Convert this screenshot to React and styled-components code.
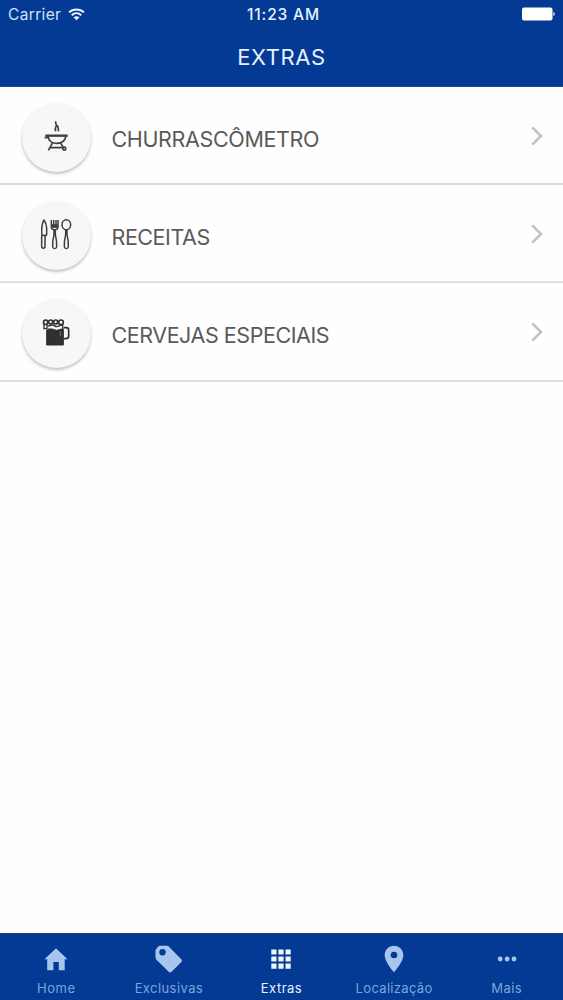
import React from "react";
import styled, { createGlobalStyle } from "styled-components";

const GlobalStyle = createGlobalStyle`
  * {
    box-sizing: border-box;
  }

  body {
    margin: 0;
    background: #fefefe;
    font-family: Inter, "Liberation Sans", sans-serif;
  }
`;

const Screen = styled.div`
  width: 100%;
  height: 1000px;
  display: flex;
  flex-direction: column;
  overflow: hidden;
`;

const Header = styled.header`
  height: 87px;
  background: #043a93;
  color: #e4f2ff;
  border-bottom: 1px solid #224a80;
`;

const StatusBar = styled.div`
  height: 28px;
  padding: 0 8px;
  display: grid;
  grid-template-columns: 1fr auto 1fr;
  align-items: center;
`;

const Carrier = styled.div`
  display: flex;
  align-items: center;
  gap: 7px;
  font-size: 15.5px;
  letter-spacing: 0.35px;
  color: #cfe4fb;
`;

const Clock = styled.div`
  padding-left: 4px;
  font-size: 15.5px;
  font-weight: 500;
  letter-spacing: 0.85px;
`;

const Battery = styled.svg`
  justify-self: end;
`;

const Title = styled.h1`
  margin: 0;
  height: 58px;
  line-height: 58px;
  text-align: center;
  font-size: 22px;
  font-weight: 400;
  letter-spacing: 0.6px;
`;

const List = styled.ul`
  flex: 1;
  margin: 0;
  padding: 0;
  list-style: none;
`;

const Item = styled.li`
  height: 98px;
  padding: 5px 20px 0 21.5px;
  display: flex;
  align-items: center;
  border-bottom: 2px solid #dedede;

  &:last-child {
    height: 99px;
    padding-top: 4px;
  }
`;

const Avatar = styled.div`
  width: 69px;
  height: 69px;
  flex: none;
  border-radius: 50%;
  background: #f7f7f7;
  box-shadow: 0 2px 3px rgba(0, 0, 0, 0.24);

  svg {
    display: block;
  }
`;

const Label = styled.span`
  flex: 1;
  margin: 3px 0 0 21px;
  font-size: 21.5px;
  letter-spacing: ${(p) => p.$spacing};
  color: #5a5a5a;
`;

const Chevron = styled.svg`
  margin-top: -4px;
`;

const TabBar = styled.nav`
  height: 67px;
  display: grid;
  grid-template-columns: repeat(5, 1fr);
  background: #043a93;
  border-top: 1px solid #1c3d78;
`;

const Tab = styled.div`
  display: flex;
  flex-direction: column;
  align-items: center;
  color: ${(p) => (p.$active ? "#e6f4ff" : "#7ba6db")};
  font-size: 13px;
  line-height: 16px;
  letter-spacing: ${(p) => p.$spacing};

  svg {
    margin: 9px 0 5px;
    color: ${(p) => (p.$active ? "#eef8ff" : "#a6c6ee")};
  }
`;

const GrillIcon = () => (
  <svg width="69" height="69" viewBox="35 40 207 207" fill="none" stroke="#3d3d3d" strokeWidth="5">
    <path d="M137 95c-4 7 4 9 0 16s-2 10-1 14M143 107c-3 6 3 9 1 18" />
    <path d="M105 138h67" strokeWidth="7" />
    <path d="M103 144h12M113 139c2 15 11 22 26 22s25-7 28-22" />
    <path d="M127 159l-13 23M150 159l9 15M121 174h36" />
    <circle cx="162" cy="177" r="4.500" />
  </svg>
);

const CutleryIcon = () => (
  <svg width="69" height="69" viewBox="35 34 207 207" fill="none" stroke="#3d3d3d" strokeWidth="4.500" strokeLinejoin="round">
    <path d="M95 138c-2-20-1-37 6-47 6 8 8 15 8 24v19c0 4-2 5-5 5v31c0 8-10 8-10 0v-29z" />
    <path d="M95 137h12" />
    <path d="M123 91v20c0 7 4 9 10 9s10-2 10-9V91M130 91v24M137 91v24M123 106h20" />
    <path d="M124 110h18" strokeWidth="8" />
    <path d="M131 120v15c-3 12-5 24-4 37 1 6 11 6 12 0 1-13-1-25-4-37v-15" />
    <ellipse cx="168" cy="105" rx="13" ry="15" />
    <path d="M166 120v15c-3 12-5 24-4 37 1 6 11 6 12 0 1-13-1-25-4-37v-15" />
  </svg>
);

const BeerIcon = () => (
  <svg width="69" height="69" viewBox="35 42 207 207" fill="none" stroke="#303030" strokeWidth="5">
    <path d="M109 135h4v-3h12c6 0 8 4 14 4s9-4 15-4h5v48h-50z" fill="#303030" strokeWidth="3" />
    <circle cx="106" cy="112" r="6.500" />
    <circle cx="121" cy="111" r="6" />
    <circle cx="136" cy="111" r="6" />
    <circle cx="152" cy="112" r="7" />
    <path d="M101 114v17h9v-13M157 118v14" strokeWidth="4" />
    <path d="M112 123c9 0 9-3 14-3 7 0 7 5 13 5s8-4 16-5" strokeWidth="4" />
    <path d="M160 128h8c4 0 7 3 7 7v18c0 5-3 8-8 8h-7" />
    <path d="M150 139v15" stroke="#969696" strokeWidth="2" />
  </svg>
);

const HomeIcon = () => (
  <svg width="32" height="32" viewBox="0 0 32 32" fill="currentColor">
    <path d="M4.500 16.200 16 5.200l11.500 11h-2.800v11h-5.900V19h-5.400v8.200H7.200v-11z" />
  </svg>
);

const TagIcon = () => (
  <svg width="32" height="32" viewBox="0 0 32 32" fill="currentColor">
    <path d="M28.500 16.500 16.500 4.200C15.500 3.200 14.800 2.800 13.400 2.800H7.400c-1 0-1.500.2-2 .8L3.200 5.900c-.5.500-.7 1-.7 1.900v6c0 1.400.2 2.100 1.200 3.100l12 11.800c.9.900 2 .9 2.900 0l9.800-9.600c.8-.8.8-1.800 0-2.600zM9.500 12.500a3.200 3.200 0 1 1 0-6.400 3.200 3.200 0 0 1 0 6.400z" />
  </svg>
);

const GridIcon = () => (
  <svg width="32" height="32" viewBox="0 0 32 32" fill="currentColor">
    <path d="M6.300 6.400h5.200v5.200H6.300zM13.400 6.400h5.200v5.200h-5.200zM20.500 6.400h5.200v5.200h-5.200zM6.300 13.400h5.200v5.200H6.300zM13.400 13.400h5.200v5.200h-5.200zM20.500 13.400h5.200v5.200h-5.200zM6.300 20.500h5.200v5.200H6.300zM13.400 20.500h5.200v5.200h-5.200zM20.500 20.500h5.200v5.200h-5.200z" />
  </svg>
);

const PinIcon = () => (
  <svg width="32" height="32" viewBox="0 0 24 24" fill="currentColor">
    <path d="M12 2C8.130 2 5 5.130 5 9c0 5.250 7 13 7 13s7-7.750 7-13c0-3.870-3.130-7-7-7zm0 9.500a2.500 2.500 0 1 1 0-5 2.500 2.500 0 0 1 0 5z" />
  </svg>
);

const MoreIcon = () => (
  <svg width="32" height="32" viewBox="0 0 32 32" fill="currentColor">
    <circle cx="9.200" cy="16" r="2.400" />
    <circle cx="16.100" cy="16" r="2.400" />
    <circle cx="23" cy="16" r="2.400" />
  </svg>
);

const items = [
  { label: "CHURRASCÔMETRO", icon: <GrillIcon />, spacing: "-0.36px" },
  { label: "RECEITAS", icon: <CutleryIcon />, spacing: "-0.45px" },
  { label: "CERVEJAS ESPECIAIS", icon: <BeerIcon />, spacing: "-0.45px" },
];

const tabs = [
  { label: "Home", icon: <HomeIcon />, spacing: "0.6px" },
  { label: "Exclusivas", icon: <TagIcon />, spacing: "0.42px" },
  { label: "Extras", icon: <GridIcon />, spacing: "0.5px", active: true },
  { label: "Localização", icon: <PinIcon />, spacing: "0.32px" },
  { label: "Mais", icon: <MoreIcon />, spacing: "0.5px" },
];

const App = () => {
  return (
    <Screen>
      <GlobalStyle />
      <Header>
        <StatusBar>
          <Carrier>
            Carrier
            <svg width="17" height="13" viewBox="0 0 17 13" fill="none" stroke="#eaf6ff" strokeWidth="2">
              <path d="M1 4.400c4.200-4 10.800-4 15 0M3.700 7.300c2.800-2.600 6.800-2.600 9.600 0" />
              <path d="M8.500 12.200 5.500 9.300c1.700-1.400 4.300-1.400 6 0z" fill="#eaf6ff" stroke="none" />
            </svg>
          </Carrier>
          <Clock>11:23 AM</Clock>
          <Battery width="33" height="14" viewBox="0 0 33 14">
            <rect x="0" y="0.500" width="30.500" height="13" rx="2" fill="#fff" />
            <path d="M31.300 5c2 .4 2 3.600 0 4z" fill="#cfe4fb" />
          </Battery>
        </StatusBar>
        <Title>EXTRAS</Title>
      </Header>
      <List>
        {items.map((item) => (
          <Item key={item.label}>
            <Avatar>{item.icon}</Avatar>
            <Label $spacing={item.spacing}>{item.label}</Label>
            <Chevron width="12" height="20" viewBox="0 0 12 20" fill="none" stroke="#c2c2c2" strokeWidth="2.600">
              <path d="M1.300 1.300 10 10l-8.700 8.700" />
            </Chevron>
          </Item>
        ))}
      </List>
      <TabBar>
        {tabs.map((tab) => (
          <Tab key={tab.label} $active={tab.active} $spacing={tab.spacing}>
            {tab.icon}
            {tab.label}
          </Tab>
        ))}
      </TabBar>
    </Screen>
  );
};

export default App;
